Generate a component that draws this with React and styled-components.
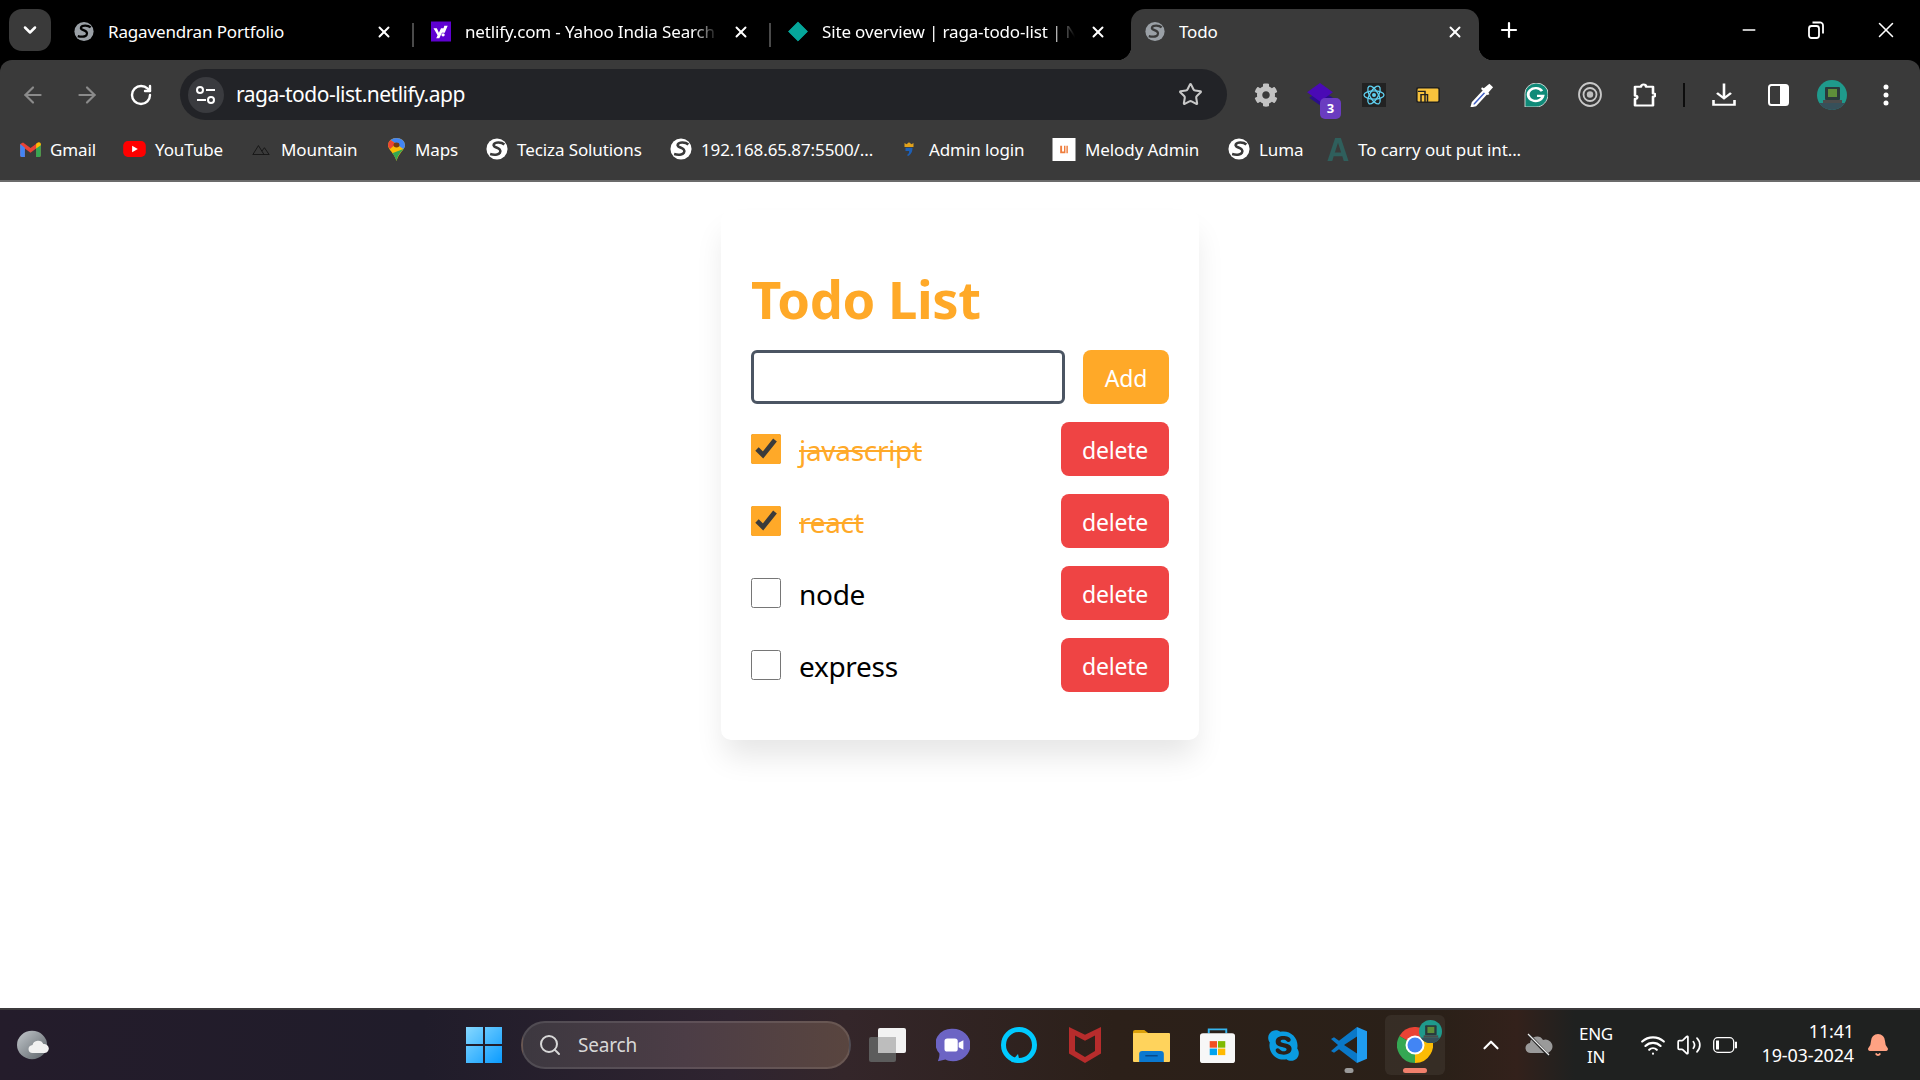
import React from "react";
import styled, { createGlobalStyle } from "styled-components";
import { ArrowLeft, ArrowRight, RotateCw, Star, X, Plus, Minus, ChevronDown, ChevronUp, Search, Wifi, Volume2, Bell } from "lucide-react";
import { FaCog, FaSkype } from "react-icons/fa";

const Global = createGlobalStyle`
  html, body { margin: 0; padding: 0; background: #fff; }
  body { font-family: "Noto Sans", "Open Sans", sans-serif; overflow: hidden; }
  * { box-sizing: border-box; }
`;

const Shell = styled.div`
  width: 1920px; height: 1080px; display: flex; flex-direction: column; background: #000;
`;

/* ---------- Tab strip ---------- */
const TabStrip = styled.div`
  height: 60px; flex: none; display: flex; align-items: flex-end; background: #000; padding-left: 9px;
`;
const TabMenu = styled.div`
  width: 42px; height: 42px; margin-bottom: 9px; border-radius: 13px; background: #3a3a3a; color: #fff;
  display: flex; align-items: center; justify-content: center; flex: none;
`;
const TabList = styled.div`
  display: flex; gap: 9px; margin-left: 9px; align-items: flex-end;
`;
const Tab = styled.div`
  position: relative; width: 348px; height: 51px; padding: 0 15px 6px 14px; display: flex; align-items: center;
  color: #fff; font-size: 17px; letter-spacing: -0.15px; border-radius: 14px 14px 0 0;
  background: ${p => (p.$active ? "#3a3a3a" : "transparent")};
  ${p => p.$active && `
    &::before, &::after { content: ""; position: absolute; bottom: 0; width: 14px; height: 14px; }
    &::before { left: -14px; background: radial-gradient(circle at 0 0, transparent 14px, #3a3a3a 14.5px); }
    &::after { right: -14px; background: radial-gradient(circle at 100% 0, transparent 14px, #3a3a3a 14.5px); }
  `}
`;
const TabSep = styled.span`
  position: absolute; right: -6px; top: 14px; width: 2px; height: 24px; background: #4a4a4a;
`;
const TabIcon = styled.span`
  width: 20px; height: 24px; flex: none; display: flex; align-items: center; justify-content: center; margin-right: 14px;
`;
const TabTitle = styled.span`
  flex: 1; min-width: 0; white-space: nowrap; overflow: hidden;
  ${p => p.$fade && `-webkit-mask-image: linear-gradient(90deg, #000 90%, transparent 100%); mask-image: linear-gradient(90deg, #000 90%, transparent 100%);`}
`;
const TabClose = styled.span`
  width: 18px; flex: none; display: flex; justify-content: center; margin-left: 14px; color: #fff;
`;
const NewTab = styled.span`
  margin-left: 18px; margin-bottom: 18px; color: #fff; display: flex;
`;
const WindowControls = styled.div`
  margin-left: auto; display: flex; margin-bottom: 17px; padding-right: 21px; gap: 49px; color: #fff; align-items: center;
`;

/* ---------- Toolbar ---------- */
const Toolbar = styled.div`
  height: 122px; flex: none; background: #3a3a3a; border-radius: 12px 12px 0 0;
  border-bottom: 2px solid #6b6b6b; display: flex; flex-direction: column;
`;
const NavRow = styled.div`
  display: flex; align-items: center; padding: 9px 7px 0 6px; height: 60px;
`;
const NavBtn = styled.span`
  width: 54px; height: 51px; flex: none; display: flex; align-items: center; justify-content: center;
  color: ${p => p.$dim ? "#8b8b8b" : "#fff"}; position: relative;
`;
const Omnibox = styled.div`
  flex: 1; height: 51px; margin: 0 12px; background: #222327; border-radius: 26px; display: flex; align-items: center; padding: 0 8px;
  color: #fff; font-size: 21px; letter-spacing: -0.5px;
`;
const SiteChip = styled.span`
  width: 36px; height: 36px; border-radius: 50%; background: #3a3b3f; flex: none; display: flex; align-items: center; justify-content: center; margin-right: 12px;
`;
const Url = styled.span`
  flex: 1; line-height: 24px; padding-bottom: 1px;
`;
const StarSlot = styled.span`
  color: #c8c8c8; display: flex; margin-right: 16px;
`;
const ToolSep = styled.span`
  width: 26px; flex: none; display: flex; justify-content: center;
  &::before { content: ""; width: 2px; height: 24px; background: #0c0c0c; }
`;
const Badge = styled.span`
  position: absolute; left: 27px; top: 29px; width: 21px; height: 21px; border-radius: 5px; background: #6a3cc0; color: #fff;
  font-size: 13px; font-weight: 700; line-height: 21px; text-align: center;
`;

/* ---------- Bookmarks ---------- */
const BookmarkBar = styled.div`
  display: flex; align-items: center; height: 60px; padding: 0 0 2px 19px;
`;
const Bookmark = styled.span`
  flex: 0 0 ${p => p.$w}px; display: flex; align-items: center; color: #fff; font-size: 17px; letter-spacing: -0.1px; white-space: nowrap;
`;
const BookmarkIcon = styled.span`
  width: ${p => p.$w || 22}px; height: 26px; flex: none; margin-right: 9px; display: flex; align-items: center; justify-content: center;
`;

/* ---------- Page ---------- */
const Page = styled.main`
  flex: 1; background: #fff; display: flex; justify-content: center; align-items: flex-start; padding-top: 28px;
`;
const Card = styled.section`
  width: 478px; height: 530px; padding: 30px; border-radius: 10px; background: #fff;
  box-shadow: 0 20px 30px -4px rgba(0,0,0,0.1);
`;
const Title = styled.h1`
  margin: 0 0 21px; font-size: 52.5px; line-height: 60px; font-weight: 700; color: #ffa928; letter-spacing: -0.4px;
  height: 89px; display: flex; align-items: flex-end;
`;
const AddRow = styled.div`
  display: flex; gap: 18px; margin-bottom: 18px;
`;
const TextInput = styled.input`
  flex: 1; min-width: 0; height: 54px; border: 3px solid #4b5563; border-radius: 6px; background: #fff; outline: none;
`;
const AddButton = styled.button`
  width: 86px; height: 54px; border: 0; border-radius: 8px; background: #ffa928; color: #fff;
  font: 400 23px "Noto Sans", sans-serif; letter-spacing: -0.2px; padding: 2px 0 0;
`;
const TodoList = styled.ul`
  list-style: none; margin: 0; padding: 0; display: flex; flex-direction: column; gap: 18px;
`;
const TodoRow = styled.li`
  display: flex; align-items: center; height: 54px;
`;
const Check = styled.input`
  width: 30px; height: 30px; margin: 0 18px 0 0; flex: none; accent-color: #ffa928;
`;
const TodoText = styled.span`
  flex: 1; font-size: 28px; letter-spacing: -0.3px; padding-top: 1px;
  color: ${p => p.$done ? "#ffa928" : "#000"};
  text-decoration: ${p => p.$done ? "line-through" : "none"};
`;
const DeleteButton = styled.button`
  width: 108px; height: 54px; border: 0; border-radius: 8px; background: #ef4444; color: #fff;
  font: 400 23px "Noto Sans", sans-serif; letter-spacing: -0.2px; padding: 2px 0 0;
`;

/* ---------- Taskbar ---------- */
const Taskbar = styled.footer`
  height: 72px; flex: none; display: flex; align-items: center; padding-left: 17px;
  border-top: 2px solid #3c3a3c;
  background: linear-gradient(90deg, #241c2b 0%, #201c2a 22%, #2f2430 38%, #34262a 44%, #2c2019 58%, #2a2018 75%, #33211b 79%, #1f2120 82%, #1f2120 100%);
`;
const Weather = styled.span`
  width: 34px; height: 32px; flex: none; display: flex;
`;
const StartSlot = styled.span`
  width: 36px; height: 36px; flex: none; margin-left: 415px; display: flex;
`;
const SearchPill = styled.div`
  width: 330px; height: 48px; margin-left: 19px; flex: none; border-radius: 24px; display: flex; align-items: center; padding-left: 15px;
  background: linear-gradient(90deg, #3d3840, #4c3d46 50%, #59453f);
  border: 2px solid rgba(255,255,255,0.1); color: #d8d8d8; font-size: 19px; letter-spacing: -0.2px;
`;
const SearchLabel = styled.span`
  margin-left: 16px;
`;
const TaskSlot = styled.span`
  position: relative; width: 66px; height: 60px; flex: none; display: flex; align-items: center; justify-content: center;
  margin-left: ${p => p.$first ? 3 : 0}px;
  ${p => p.$active && `background: rgba(255,255,255,0.06); border-radius: 6px; width: 60px; margin: 0 3px;`}
`;
const RunDot = styled.span`
  position: absolute; bottom: 2px; left: 50%; transform: translateX(-50%); height: 5px; border-radius: 3px;
  width: ${p => p.$active ? 24 : 9}px; background: ${p => p.$active ? "#f0806c" : "#9a9a9a"};
`;
const ProfileBadge = styled.span`
  position: absolute; right: 3px; top: 5px; display: flex;
`;
const TrayItem = styled.span`
  width: ${p => p.$w}px; margin-left: ${p => p.$ml || 0}px; height: 48px; flex: none; display: flex; align-items: center; justify-content: center; color: #fff;
`;
const Lang = styled.span`
  width: 60px; margin-left: 9px; flex: none; text-align: center; color: #fff; font-size: 17px; line-height: 23px; letter-spacing: -0.3px;
`;
const Clock = styled.span`
  width: 111px; flex: none; text-align: right; color: #fff; font-size: 18px; line-height: 24px; letter-spacing: -0.15px; margin-top: -4px;
`;
const BellSlot = styled.span`
  margin-left: 6px; width: 36px; flex: none; display: flex; justify-content: center;
`;

/* ---------- Drawn icons ---------- */
const Globe = ({ size = 22, fill = "#fff", land = "#3a3a3a" }) => (
  <svg width={size} height={size} viewBox="0 0 24 24">
    <circle cx="12" cy="12" r="11.5" fill={fill} />
    <path d="M20 7C17 4.500 10 4 8.500 7 7 10 13 10 15 12.500c2 2.500-.5 5-3 5.500-2.500.5-4 .5-7.500-.5" fill="none" stroke={land} strokeWidth="2.800" />
  </svg>
);
const Gmail = () => (
  <svg width="21" height="15" viewBox="0 0 22 16">
    <path d="M0 2v12a2 2 0 0 0 2 2h3V7l6 4.500L17 7v9h3a2 2 0 0 0 2-2V2l-3-1.500-8 6-8-6Z" fill="#ea4335" />
    <path d="M0 2v12a2 2 0 0 0 2 2h3V6Z" fill="#4285f4" />
    <path d="M22 2v12a2 2 0 0 1-2 2h-3V6Z" fill="#34a853" />
    <path d="M17 1.800v5.200l5-3.500V2a2 2 0 0 0-3-1.500Z" fill="#fbbc04" />
  </svg>
);
const YouTube = () => (
  <svg width="23" height="16" viewBox="0 0 24 17">
    <rect width="24" height="17" rx="5" fill="#f00" />
    <path d="M9.500 5v7l6-3.500Z" fill="#fff" />
  </svg>
);
const Mountain = () => (
  <svg width="18" height="12" viewBox="0 0 20 14" fill="none" stroke="#151515" strokeWidth="1.100">
    <path d="M.5 13.500 7 3l6.500 10.500ZM11 9.500l3-4 5.500 8H13" />
  </svg>
);
const MapsPin = () => (
  <svg width="17" height="23" viewBox="0 0 17 28" preserveAspectRatio="none">
    <path d="M8.500 0a8.500 8.500 0 0 1 8.500 8.500c0 6-6 9-8.500 19.500C6 17.500 0 14.500 0 8.500A8.500 8.500 0 0 1 8.500 0Z" fill="#fbbc04" />
    <path d="M8.500 0a8.500 8.500 0 0 1 8.500 8.500c0 2-.7 3.500-1.600 5L2.500 2.500A8.400 8.400 0 0 1 8.500 0Z" fill="#4285f4" />
    <path d="M0 8.500A8.400 8.400 0 0 1 2.500 2.500L8 7 2 13.500A8 8 0 0 1 0 8.500Z" fill="#ea4335" />
    <path d="M15.400 13.500c-2.400 4-5.600 7-6.900 14.500-.8-4-2.500-7-4.300-9.500Z" fill="#34a853" />
    <circle cx="8.500" cy="8.500" r="3" fill="#7a3b10" />
  </svg>
);
const AdminLogo = () => (
  <svg width="12" height="16" viewBox="0 0 12 24" preserveAspectRatio="none">
    <path d="M1.500 3 3.500 5 6 2l2.500 3 2-2V9h-9Z" fill="#e0a11b" />
    <path d="M2.500 10h7c0 5-1 10-4.500 12.500l-1-1.500c2-2 2.500-4 2-6h-3.500Z" fill="#1e5fb4" />
  </svg>
);
const MelodyLogo = () => (
  <svg width="24" height="23" viewBox="0 0 24 24">
    <rect width="24" height="24" fill="#fff" />
    <path d="M8 8h2v6h2V8h1.500v8H8ZM14.500 8H16v8h-1.500Z" fill="#ef7d3c" />
  </svg>
);
const LetterA = () => (
  <svg width="22" height="23" viewBox="0 0 22 24">
    <path d="M8 0h6l8 24h-5l-1.500-5h-9L5 24H0ZM11 5l-3.300 10h6.600Z" fill="#2f5f5c" />
  </svg>
);
const Sliders = () => (
  <svg width="22" height="20" viewBox="0 0 22 20" fill="none" stroke="#fff" strokeWidth="2">
    <circle cx="5" cy="5" r="3" /><path d="M11 5h9M2 15h9" /><circle cx="16" cy="15" r="3" />
  </svg>
);
const Restore = () => (
  <svg width="16" height="18" viewBox="0 0 16 18" fill="none" stroke="#fff" strokeWidth="1.800">
    <rect x="1" y="5" width="10" height="12" rx="2.500" /><path d="M4.500 1.500h7A3 3 0 0 1 15 4.500v8" />
  </svg>
);
const ExtStack = () => (
  <svg width="28" height="25" viewBox="0 0 26 27" preserveAspectRatio="none">
    <path d="M3 17 14 9l11 8-11 9Z" fill="#2a0f8a" />
    <path d="M1 11 13 1l12 10-12 10Z" fill="#4a0ab5" />
  </svg>
);
const ReactLogo = () => (
  <svg width="24" height="24" viewBox="0 0 24 24">
    <rect width="24" height="24" fill="#222" />
    <g fill="none" stroke="#5fd0f0" strokeWidth="1.300">
      <ellipse cx="12" cy="12" rx="10" ry="4.200" />
      <ellipse cx="12" cy="12" rx="10" ry="4.200" transform="rotate(60 12 12)" />
      <ellipse cx="12" cy="12" rx="10" ry="4.200" transform="rotate(120 12 12)" />
    </g>
    <circle cx="12" cy="12" r="2" fill="#5fd0f0" />
  </svg>
);
const YellowExt = () => (
  <svg width="24" height="16" viewBox="0 0 24 18" preserveAspectRatio="none">
    <rect x=".8" y=".8" width="22.400" height="16.400" rx="2" fill="#f8c33c" stroke="#222" strokeWidth="1.600" />
    <path d="M2 5h7v12M5 17V8.500h6.500V17" fill="none" stroke="#222" strokeWidth="1.500" />
  </svg>
);
const Dropper = () => (
  <svg width="24" height="24" viewBox="0 0 26 28" preserveAspectRatio="none">
    <path d="M3 23 15 9l3 3L6 26l-4 1Z" fill="#3f5fc4" stroke="#fff" strokeWidth="2.400" />
    <path d="M15 6l6-5 4 4-5 6 1 2-2 1-7-7 1-2Z" fill="#fff" />
  </svg>
);
const Grammarly = () => (
  <svg width="24" height="24" viewBox="0 0 24 28" preserveAspectRatio="none">
    <path d="M12 0a12 12 0 0 1 12 13c0 8-5 15-12 15H1V12A12 12 0 0 1 12 0Z" fill="#0f8a78" stroke="#d6d6d6" strokeWidth="1" />
    <path d="M18 9.500A7.500 7.500 0 1 0 19 15h-6" fill="none" stroke="#fff" strokeWidth="2.800" />
  </svg>
);
const Target = () => (
  <svg width="24" height="25" viewBox="0 0 24 25" fill="none" stroke="#c8c8c8">
    <ellipse cx="12" cy="12.500" rx="11" ry="11.500" strokeWidth="1.800" />
    <circle cx="12" cy="12.500" r="6.500" strokeWidth="1.800" />
    <circle cx="12" cy="12.500" r="3.200" fill="#bdbdbd" stroke="none" />
  </svg>
);
const PuzzleIcon = () => (
  <svg width="24" height="24" viewBox="0 0 24 32" preserveAspectRatio="none" fill="none" stroke="#fff" strokeWidth="2.600" strokeLinejoin="round">
    <path d="M3 5h6c0-4 5-4 5 0h7v9c3-1 3 5 0 4v12H3v-9c3 1 3-5 0-4Z" />
  </svg>
);
const DownloadIcon = () => (
  <svg width="24" height="25" viewBox="0 0 24 32" preserveAspectRatio="none" fill="none" stroke="#fff" strokeWidth="2.600">
    <path d="M12 2v19M5 14l7 7 7-7M1.500 23v6h21v-6" />
  </svg>
);
const SidePanel = () => (
  <svg width="21" height="22" viewBox="0 0 21 22">
    <rect x="1" y="1" width="19" height="20" rx="2.500" fill="none" stroke="#fff" strokeWidth="2" />
    <rect x="12" y="1" width="8" height="20" fill="#fff" />
  </svg>
);
const Avatar = ({ size = 30 }) => (
  <svg width={size} height={size} viewBox="0 0 30 30">
    <clipPath id={`av${size}`}><circle cx="15" cy="15" r="15" /></clipPath>
    <g clipPath={`url(#av${size})`}>
      <rect width="30" height="30" fill="#1f9a8c" />
      <rect y="23" width="30" height="7" fill="#37505a" />
      <rect x="8" y="7" width="15" height="13" rx="1" fill="#2a3a3c" />
      <rect x="11" y="9" width="9" height="8" fill="#5e8f3a" />
      <rect x="6" y="20" width="19" height="3" fill="#4c4c4c" />
    </g>
  </svg>
);
const VDots = () => (
  <svg width="6" height="22" viewBox="0 0 6 22" fill="#fff">
    <circle cx="3" cy="3" r="2.500" /><circle cx="3" cy="11" r="2.500" /><circle cx="3" cy="19" r="2.500" />
  </svg>
);
const YahooTile = () => (
  <svg width="24" height="23" viewBox="0 0 24 24">
    <rect width="24" height="24" fill="#5f01d1" />
    <path d="M3 8h4l2.500 5.500L12 8h3.800l-5.800 12H6.300l1.600-3.500ZM16 5h4l-3.500 8.500h-3.200Z" fill="#fff" />
    <circle cx="14.500" cy="16" r="2" fill="#fff" />
  </svg>
);
const Diamond = () => (
  <svg width="24" height="23" viewBox="0 0 24 24">
    <path d="M12 .5 23.500 12 12 23.500.5 12Z" fill="#05a69a" strokeLinejoin="round" stroke="#05a69a" />
  </svg>
);
const WeatherIcon = () => (
  <svg width="32" height="32" viewBox="0 0 34 36" preserveAspectRatio="none">
    <defs><linearGradient id="moon" x1="0" y1="0" x2="1" y2="1"><stop offset="0" stopColor="#c3c8cc" /><stop offset="1" stopColor="#5b6268" /></linearGradient></defs>
    <circle cx="16" cy="18" r="16" fill="url(#moon)" />
    <path d="M17 27a4.500 4.500 0 0 1-.5-9 6 6 0 0 1 11.500-1 5 5 0 0 1 1.500 10Z" fill="#f1f1f1" />
  </svg>
);
const StartLogo = () => (
  <svg width="36" height="36" viewBox="0 0 36 36">
    <defs><linearGradient id="win" x1="0" y1="0" x2="1" y2="1"><stop offset="0" stopColor="#86d8ff" /><stop offset="1" stopColor="#0a9bff" /></linearGradient></defs>
    <path d="M0 0h17v17H0ZM19 0h17v17H19ZM0 19h17v17H0ZM19 19h17v17H19Z" fill="url(#win)" />
  </svg>
);
const TaskView = () => (
  <svg width="37" height="34" viewBox="0 0 37 34">
    <rect x="0" y="9" width="27" height="25" rx="2" fill="#5c5c5c" />
    <rect x="9" y="0" width="28" height="25" rx="2" fill="#f2f2f2" />
    <rect x="9" y="9" width="18" height="16" fill="#bdbdbd" />
  </svg>
);
const MeetIcon = () => (
  <svg width="34" height="34" viewBox="0 0 36 39" preserveAspectRatio="none">
    <path d="M18 1a17 17 0 0 1 0 37c-3.500 0-6-1-8-2l-8 2c1-3 2-6 1.500-9A17 17 0 0 1 18 1Z" fill="#6c64c4" />
    <rect x="9" y="12" width="14" height="15" rx="3" fill="#fff" />
    <path d="m24 17 5-3v11l-5-3Z" fill="#fff" />
  </svg>
);
const Alexa = () => (
  <svg width="36" height="36" viewBox="0 0 36 36" fill="none">
    <circle cx="18" cy="18" r="15.500" stroke="#00caff" strokeWidth="5" />
    <path d="M10 35 17 27l2 9Z" fill="#00caff" />
  </svg>
);
const McAfee = () => (
  <svg width="32" height="36" viewBox="0 0 32 42" preserveAspectRatio="none">
    <path d="M0 0 16 9 32 0v31L16 42 0 31Zm6 10v18l10 7 10-7V10l-10 6Z" fill="#b72c2c" />
  </svg>
);
const Folder = () => (
  <svg width="37" height="33" viewBox="0 0 36 33" preserveAspectRatio="none">
    <path d="M0 3a2 2 0 0 1 2-2h9l5 4h-16Z" fill="#dba00a" />
    <rect y="4" width="36" height="29" rx="1" fill="#ffd35c" />
    <path d="M6 33v-8a3 3 0 0 1 3-3h18a3 3 0 0 1 3 3v8Z" fill="#0a78d0" />
    <rect x="12" y="26" width="12" height="1.500" fill="#064a8c" />
  </svg>
);
const StoreIcon = () => (
  <svg width="35" height="35" viewBox="0 0 36 40" preserveAspectRatio="none">
    <path d="M9 6V1.500h18V6" fill="none" stroke="#35b4ee" strokeWidth="2" />
    <rect y="6" width="36" height="34" rx="3" fill="#f7f7f7" />
    <rect x="10" y="15" width="7.500" height="7.500" fill="#f25022" />
    <rect x="18.500" y="15" width="7.500" height="7.500" fill="#7fba00" />
    <rect x="10" y="23.500" width="7.500" height="7.500" fill="#00a4ef" />
    <rect x="18.500" y="23.500" width="7.500" height="7.500" fill="#ffb900" />
  </svg>
);
const VSCode = () => (
  <svg width="36" height="36" viewBox="0 0 36 42" preserveAspectRatio="none">
    <path d="M26 0 36 5v32l-10 5Z" fill="#1f9cf0" />
    <path d="M26 0v11L13 21l13 10v11L8 26l-5 4-3-2 7-7-7-7 3-2 5 4Z" fill="#0a78c8" />
  </svg>
);
const ChromeIcon = () => (
  <svg width="36" height="36" viewBox="0 0 36 36">
    <path d="M18 18 33.600 9A18 18 0 0 0 2.400 9Z" fill="#ea4335" />
    <path d="M18 18 33.600 9A18 18 0 0 1 18 36Z" fill="#fbbc04" />
    <path d="M18 18V36A18 18 0 0 1 2.400 9Z" fill="#34a853" />
    <circle cx="18" cy="18" r="9.500" fill="#fff" />
    <circle cx="18" cy="18" r="7.500" fill="#4285f4" />
  </svg>
);
const CloudOff = () => (
  <svg width="28" height="24" viewBox="0 0 28 24">
    <path d="M6 20a5 5 0 0 1-1-10 7 7 0 0 1 13-3 6 6 0 0 1 5 13Z" fill="#9a9a9a" />
    <path d="M4 2 24 23" stroke="#222" strokeWidth="3" /><path d="M3 1l21 21" stroke="#eee" strokeWidth="1.300" />
  </svg>
);
const BatteryIcon = () => (
  <svg width="24" height="16" viewBox="0 0 24 16" fill="none" stroke="#fff" strokeWidth="1.300">
    <rect x=".7" y=".7" width="20" height="14.600" rx="4" />
    <rect x="3" y="3.500" width="3" height="9" fill="#fff" stroke="none" />
    <path d="M22 5.500h1.500v5H22" fill="#fff" />
  </svg>
);

const tabs = [
  { title: "Ragavendran Portfolio", icon: <Globe size={21} fill="#9aa0a6" land="#000" />, sep: true },
  { title: "netlify.com - Yahoo India Search", icon: <YahooTile />, fade: true, sep: true },
  { title: "Site overview | raga-todo-list | N", icon: <Diamond />, fade: true },
  { title: "Todo", icon: <Globe size={21} fill="#9aa0a6" land="#3a3a3a" />, active: true },
];
const bookmarks = [
  { w: 103, label: "Gmail", icon: <Gmail /> },
  { w: 128, label: "YouTube", icon: <YouTube />, iw: 24 },
  { w: 137, label: "Mountain", icon: <Mountain /> },
  { w: 99, label: "Maps", icon: <MapsPin />, iw: 19 },
  { w: 184, label: "Teciza Solutions", icon: <Globe /> },
  { w: 228, label: "192.168.65.87:5500/...", icon: <Globe /> },
  { w: 154, label: "Admin login", icon: <AdminLogo /> },
  { w: 176, label: "Melody Admin", icon: <MelodyLogo />, iw: 24 },
  { w: 99, label: "Luma", icon: <Globe /> },
  { w: 200, label: "To carry out put int...", icon: <LetterA /> },
];
const todos = [
  { text: "javascript", done: true },
  { text: "react", done: true },
  { text: "node", done: false },
  { text: "express", done: false },
];

export default function App() {
  return (
    <Shell>
      <Global />
      <TabStrip>
        <TabMenu><ChevronDown size={20} strokeWidth={3} /></TabMenu>
        <TabList>
          {tabs.map(t => (
            <Tab key={t.title} $active={t.active}>
              <TabIcon>{t.icon}</TabIcon>
              <TabTitle $fade={t.fade}>{t.title}</TabTitle>
              <TabClose><X size={18} strokeWidth={2.6} /></TabClose>
              {t.sep && <TabSep />}
            </Tab>
          ))}
        </TabList>
        <NewTab><Plus size={24} strokeWidth={2.2} /></NewTab>
        <WindowControls>
          <Minus size={20} strokeWidth={1.6} />
          <Restore />
          <X size={26} strokeWidth={1.4} />
        </WindowControls>
      </TabStrip>
      <Toolbar>
        <NavRow>
          <NavBtn $dim><ArrowLeft size={26} strokeWidth={2} /></NavBtn>
          <NavBtn $dim><ArrowRight size={26} strokeWidth={2} /></NavBtn>
          <NavBtn><RotateCw size={24} strokeWidth={2.4} /></NavBtn>
          <Omnibox>
            <SiteChip><Sliders /></SiteChip>
            <Url>raga-todo-list.netlify.app</Url>
            <StarSlot><Star size={25} strokeWidth={2} /></StarSlot>
          </Omnibox>
          <NavBtn><FaCog size={24} color="#c2c2c2" /></NavBtn>
          <NavBtn><ExtStack /><Badge>3</Badge></NavBtn>
          <NavBtn><ReactLogo /></NavBtn>
          <NavBtn><YellowExt /></NavBtn>
          <NavBtn><Dropper /></NavBtn>
          <NavBtn><Grammarly /></NavBtn>
          <NavBtn><Target /></NavBtn>
          <NavBtn><PuzzleIcon /></NavBtn>
          <ToolSep />
          <NavBtn><DownloadIcon /></NavBtn>
          <NavBtn><SidePanel /></NavBtn>
          <NavBtn><Avatar /></NavBtn>
          <NavBtn><VDots /></NavBtn>
        </NavRow>
        <BookmarkBar>
          {bookmarks.map(b => (
            <Bookmark key={b.label} $w={b.w}>
              <BookmarkIcon $w={b.iw}>{b.icon}</BookmarkIcon>
              {b.label}
            </Bookmark>
          ))}
        </BookmarkBar>
      </Toolbar>
      <Page>
        <Card>
          <Title>Todo List</Title>
          <AddRow>
            <TextInput />
            <AddButton>Add</AddButton>
          </AddRow>
          <TodoList>
            {todos.map(t => (
              <TodoRow key={t.text}>
                <Check type="checkbox" defaultChecked={t.done} />
                <TodoText $done={t.done}>{t.text}</TodoText>
                <DeleteButton>delete</DeleteButton>
              </TodoRow>
            ))}
          </TodoList>
        </Card>
      </Page>
      <Taskbar>
        <Weather><WeatherIcon /></Weather>
        <StartSlot><StartLogo /></StartSlot>
        <SearchPill><Search size={24} strokeWidth={2} /><SearchLabel>Search</SearchLabel></SearchPill>
        <TaskSlot $first><TaskView /></TaskSlot>
        <TaskSlot><MeetIcon /></TaskSlot>
        <TaskSlot><Alexa /></TaskSlot>
        <TaskSlot><McAfee /></TaskSlot>
        <TaskSlot><Folder /></TaskSlot>
        <TaskSlot><StoreIcon /></TaskSlot>
        <TaskSlot><FaSkype size={35} color="#0a9be0" /></TaskSlot>
        <TaskSlot><VSCode /><RunDot /></TaskSlot>
        <TaskSlot $active><ChromeIcon /><ProfileBadge><Avatar size={23} /></ProfileBadge><RunDot $active /></TaskSlot>
        <TrayItem $w={36} $ml={25}><ChevronUp size={26} strokeWidth={2} /></TrayItem>
        <TrayItem $w={36} $ml={12}><CloudOff /></TrayItem>
        <Lang>ENG<br />IN</Lang>
        <TrayItem $w={36} $ml={9}><Wifi size={26} strokeWidth={2} /></TrayItem>
        <TrayItem $w={36}><Volume2 size={26} strokeWidth={1.6} /></TrayItem>
        <TrayItem $w={36}><BatteryIcon /></TrayItem>
        <Clock>11:41<br />19-03-2024</Clock>
        <BellSlot><Bell size={24} fill="#ffa283" color="#ffa283" /></BellSlot>
      </Taskbar>
    </Shell>
  );
}
